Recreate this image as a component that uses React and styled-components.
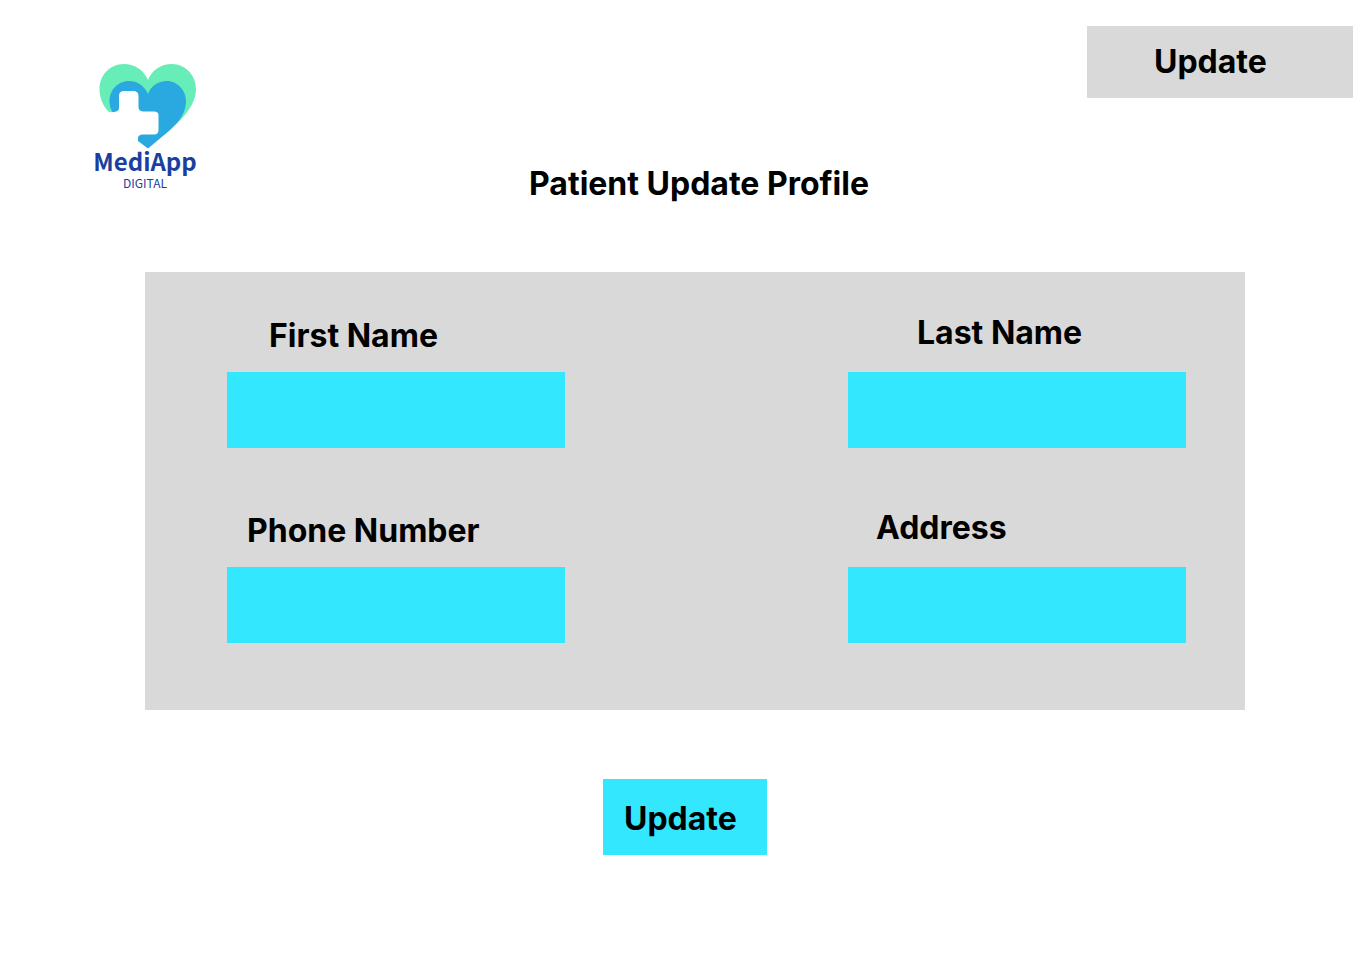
import React from "react";
import styled, { createGlobalStyle } from "styled-components";

const GlobalStyle = createGlobalStyle`
  *, *::before, *::after { box-sizing: border-box; }
  body {
    margin: 0;
    background: #fff;
    color: #000;
    font-family: Inter, "Liberation Sans", sans-serif;
  }
`;

const Header = styled.header`
  display: flex;
  justify-content: space-between;
  align-items: flex-start;
  padding-top: 26px;
`;

const Brand = styled.a`
  display: flex;
  flex-direction: column;
  align-items: center;
  width: 104px;
  margin: 36px 0 0 93px;
  color: #1b3fa0;
  font-family: "Noto Sans CJK SC", "Noto Sans", sans-serif;
  text-decoration: none;
`;

const BrandName = styled.span`
  font-size: 24px;
  font-weight: 700;
  line-height: 24px;
`;

const BrandTag = styled.span`
  font-size: 12px;
  font-weight: 400;
  line-height: 20px;
`;

const Button = styled.button`
  border: 0;
  padding: 0;
  color: inherit;
  font: 700 32px/40px Inter, "Liberation Sans", sans-serif;
  text-align: left;
  cursor: pointer;
`;

const HeaderButton = styled(Button)`
  width: 266px;
  height: 72px;
  padding-left: 67px;
  background: #d9d9d9;
`;

const SubmitButton = styled(Button)`
  width: 164px;
  height: 76px;
  margin: 69px 20px 0 0;
  padding: 4px 0 0 21px;
  background: #33e7ff;
`;

const Main = styled.main`
  margin-top: -29px;
  padding: 0 108px 40px 145px;
`;

const Title = styled.h1`
  margin: 0 0 68px;
  padding-left: 8px;
  font-size: 32px;
  font-weight: 700;
  line-height: 40px;
  text-align: center;
`;

const Form = styled.form`
  display: flex;
  flex-direction: column;
  align-items: center;
`;

const Panel = styled.div`
  display: grid;
  grid-template-columns: 338px 338px;
  justify-content: space-between;
  row-gap: 60px;
  width: 100%;
  padding: 41px 59px 67px 82px;
  background: #d9d9d9;
`;

const Field = styled.div`
  display: flex;
  flex-direction: column;
`;

const Label = styled.label`
  height: 59px;
  padding: ${(p) => (p.$raised ? 0 : 3)}px 0 0 ${(p) => p.$indent}px;
  font-size: 32px;
  font-weight: 700;
  line-height: 40px;
`;

const Input = styled.input`
  width: 100%;
  height: 76px;
  border: 0;
  border-radius: 0;
  padding: 0 20px;
  background: #33e7ff;
  color: inherit;
  font: 400 24px/32px Inter, "Liberation Sans", sans-serif;
`;

const fields = [
  { id: "firstName", label: "First Name", indent: 42 },
  { id: "lastName", label: "Last Name", indent: 69, raised: true },
  { id: "phone", label: "Phone Number", indent: 20, type: "tel" },
  { id: "address", label: "Address", indent: 28, raised: true },
];

function HeartLogo() {
  return (
    <svg width="104" height="87" viewBox="93 62 104 87" aria-hidden="true">
      <path
        fill="#66edb8"
        d="M148 80C143 69 134 64 124 64C110 64 99.500 75 99.500 89C99.500 98 103 106 109 112L148 148L170 130C186 116 196 103 196 89C196 75 185 64 172 64C161 64 152 70 148 80Z"
      />
      <path
        fill="#29a9df"
        d="M148 94C144 85 137 81 129 81C118 81 109.500 90 109.500 101C109.500 105 110.500 109 112.500 112L138 141L148 148.500L170 130C180 121 186 112 186 101C186 90 177 81 167 81C158 81 151 86 148 94Z"
      />
      <path
        fill="#fff"
        d="M106 111.500Q111 112.500 114 112Q119 111.500 119 108V96Q119 91 124 91H133Q138.500 91 138.500 96V107Q138.500 111 143 111.500H154Q158.500 111.500 158.500 115V130Q158.500 134.500 154 134.500H142Q138 135 138 138V142H130L104 114Z"
      />
    </svg>
  );
}

export default function App() {
  return (
    <>
      <GlobalStyle />
      <Header>
        <Brand href="#">
          <HeartLogo />
          <BrandName>MediApp</BrandName>
          <BrandTag>DIGITAL</BrandTag>
        </Brand>
        <HeaderButton type="button">Update</HeaderButton>
      </Header>
      <Main>
        <Title>Patient Update Profile</Title>
        <Form onSubmit={(e) => e.preventDefault()}>
          <Panel>
            {fields.map((f) => (
              <Field key={f.id}>
                <Label htmlFor={f.id} $indent={f.indent} $raised={f.raised}>
                  {f.label}
                </Label>
                <Input id={f.id} name={f.id} type={f.type || "text"} />
              </Field>
            ))}
          </Panel>
          <SubmitButton type="submit">Update</SubmitButton>
        </Form>
      </Main>
    </>
  );
}
